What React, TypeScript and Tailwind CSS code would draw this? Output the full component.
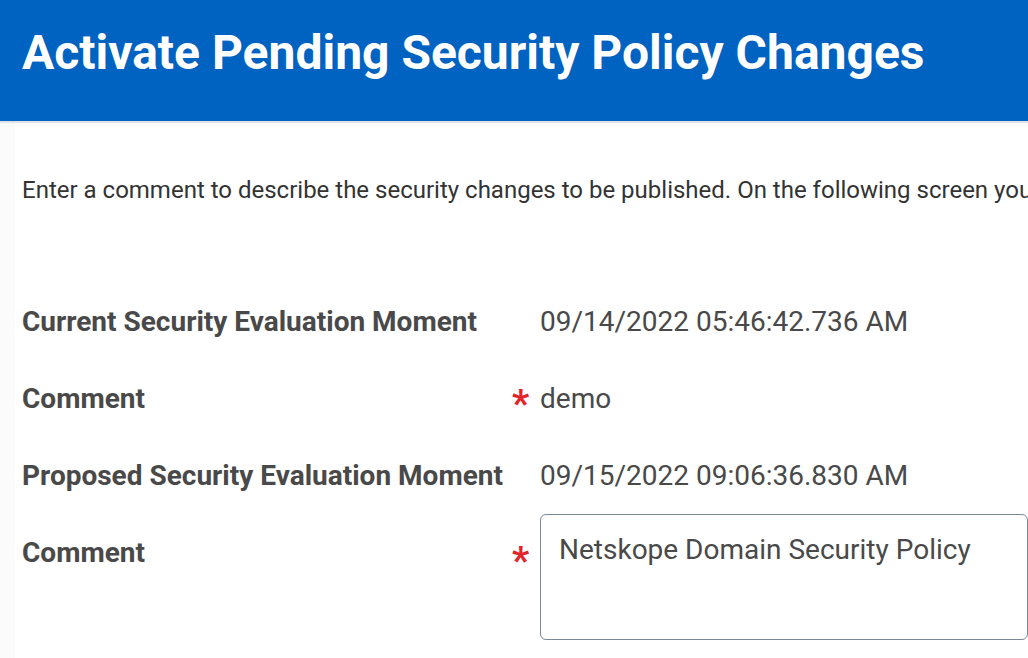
import React from "react";

const Row = ({ label, value, required }: { label: string; value: React.ReactNode; required?: boolean }) => (
  <div className="flex items-center h-[77px]">
    <div className="w-[490px] shrink-0 text-[28px] font-bold text-[#494949] whitespace-nowrap">{label}</div>
    <div className="w-[28px] shrink-0 text-[38px] leading-none text-[#e4242b] font-bold pt-[10px]">{required ? "*" : ""}</div>
    <div className="text-[28px] text-[#494949] whitespace-nowrap">{value}</div>
  </div>
);

export default function App() {
  return (
    <div className="w-[1028px] h-[658px] overflow-hidden bg-white" style={{ fontFamily: "Roboto, 'Liberation Sans', sans-serif" }}>
      <div className="h-[121px] bg-[#0062c1] flex items-start px-[22px] pt-[23px]">
        <h1 className="text-[48px] font-bold text-white whitespace-nowrap leading-[60px]">Activate Pending Security Policy Changes</h1>
      </div>
      <div className="h-[2px] bg-[#dfe3e8]" />
      <div className="flex">
        <div className="w-[15px] shrink-0 bg-[#fbfbfb] h-[535px]" />
        <div className="pl-[7px] min-w-0">
          <p className="mt-[49px] text-[24px] text-[#333333] whitespace-nowrap">
            Enter a comment to describe the security changes to be published. On the following screen you
          </p>
          <div className="mt-[75px]">
            <Row label="Current Security Evaluation Moment" value="09/14/2022 05:46:42.736 AM" />
            <Row label="Comment" value="demo" required />
            <Row label="Proposed Security Evaluation Moment" value="09/15/2022 09:06:36.830 AM" />
            <div className="flex items-start">
              <div className="w-[490px] shrink-0 text-[28px] font-bold text-[#494949] pt-[18px]">Comment</div>
              <div className="w-[28px] shrink-0 text-[38px] leading-none text-[#e4242b] font-bold pt-[28px]">*</div>
              <div className="w-[600px] h-[126px] border-[1.5px] border-[#7b8794] rounded-[6px] px-[18px] pt-[14px] text-[28px] text-[#494949] whitespace-nowrap">
                Netskope Domain Security Policy
              </div>
            </div>
          </div>
        </div>
      </div>
    </div>
  );
}
